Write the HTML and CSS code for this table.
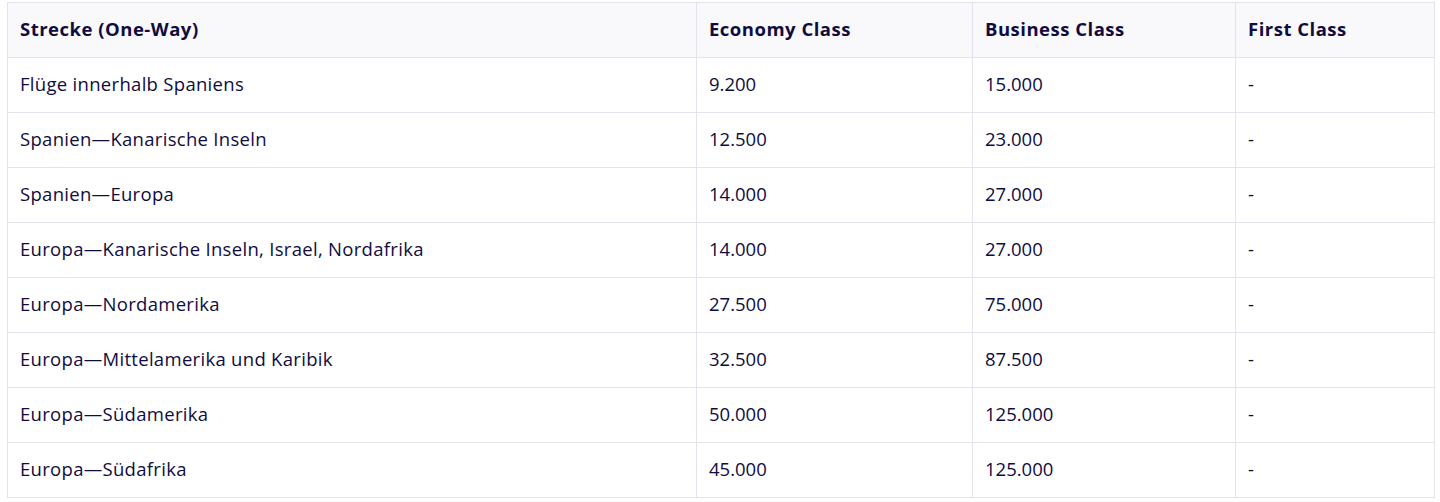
FILE: index.html
```html
<!DOCTYPE html>
<html lang="de">
<head>
<meta charset="utf-8">
<link rel="stylesheet" href="styles.css">
</head>
<body>
<table class="miles">
  <colgroup>
    <col class="c1"><col class="c2"><col class="c3"><col class="c4">
  </colgroup>
  <thead>
    <tr><th>Strecke (One-Way)</th><th>Economy Class</th><th>Business Class</th><th>First Class</th></tr>
  </thead>
  <tbody>
    <tr><td>Flüge innerhalb Spaniens</td><td>9.200</td><td>15.000</td><td>-</td></tr>
    <tr><td>Spanien—Kanarische Inseln</td><td>12.500</td><td>23.000</td><td>-</td></tr>
    <tr><td>Spanien—Europa</td><td>14.000</td><td>27.000</td><td>-</td></tr>
    <tr><td>Europa—Kanarische Inseln, Israel, Nordafrika</td><td>14.000</td><td>27.000</td><td>-</td></tr>
    <tr><td>Europa—Nordamerika</td><td>27.500</td><td>75.000</td><td>-</td></tr>
    <tr><td>Europa—Mittelamerika und Karibik</td><td>32.500</td><td>87.500</td><td>-</td></tr>
    <tr><td>Europa—Südamerika</td><td>50.000</td><td>125.000</td><td>-</td></tr>
    <tr><td>Europa—Südafrika</td><td>45.000</td><td>125.000</td><td>-</td></tr>
  </tbody>
</table>
</body>
</html>
```
FILE: styles.css
```css
html, body {
  margin: 0;
  padding: 0;
  background: #ffffff;
}
body {
  padding: 2px 6px 0 7px;
  font-family: "Open Sans", "Noto Sans", sans-serif;
  color: #100c3f;
}
.miles {
  border-collapse: collapse;
  table-layout: fixed;
  width: 1427px;
}
.c1 { width: 689px; }
.c2 { width: 276px; }
.c3 { width: 263px; }
.c4 { width: 199px; }
.miles th, .miles td {
  border: 1px solid #e3e2ed;
  height: 55px;
  padding: 0 0 3px 12px;
  text-align: left;
  vertical-align: middle;
  font-size: 18.5px;
  box-sizing: border-box;
}
.miles th {
  background: #f9f9fb;
  font-weight: 700;
  letter-spacing: 0.5px;
}
.miles td {
  font-weight: 400;
}
.miles td:first-child {
  letter-spacing: 0.3px;
}
```
